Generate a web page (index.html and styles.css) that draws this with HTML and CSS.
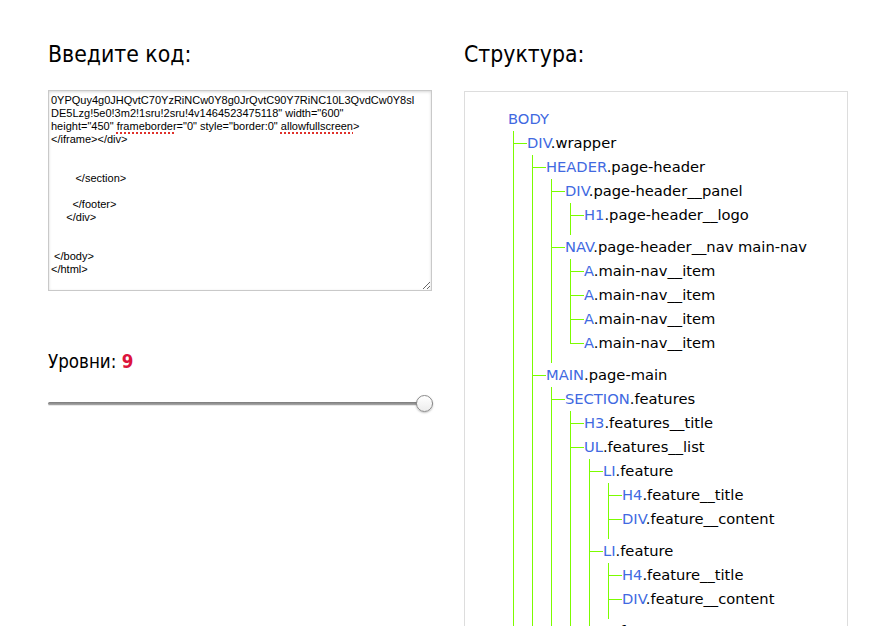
FILE: index.html
```html
<!DOCTYPE html>
<html lang="ru">
<head>
<meta charset="utf-8">
<title>Структура DOM</title>
<link rel="stylesheet" href="styles.css">
</head>
<body>
<div class="page">
  <section class="col">
    <h2 class="title">Введите код:</h2>
    <div class="code" role="textbox" aria-multiline="true">0YPQuy4g0JHQvtC70YzRiNCw0Y8g0JrQvtC90Y7RiNC10L3QvdCw0Y8sl
DE5Lzg!5e0!3m2!1sru!2sru!4v1464523475118" width="600"
height="450" <span class="spell">frameborder</span>="0" style="border:0" <span class="spell">allowfullscreen</span>&gt;
&lt;/iframe&gt;&lt;/div&gt;


        &lt;/section&gt;

       &lt;/footer&gt;
     &lt;/div&gt;


 &lt;/body&gt;
&lt;/html&gt;</div>
    <p class="levels">Уровни: <span class="levels__num">9</span></p>
    <input class="range" type="range" min="1" max="9" value="9" aria-label="Уровни">
  </section>
  <section class="col">
    <h2 class="title">Структура:</h2>
    <div class="tree">
      <ul class="kids kids--root">
        <li><span class="n n--root"><b>BODY</b></span>
          <ul class="kids">
            <li><span class="n"><b>DIV</b>.wrapper</span>
              <ul class="kids">
                <li><span class="n"><b>HEADER</b>.page-header</span>
                  <ul class="kids">
                    <li><span class="n"><b>DIV</b>.page-header__panel</span>
                      <ul class="kids">
                        <li><span class="n"><b>H1</b>.page-header__logo</span></li>
                      </ul>
                    </li>
                    <li><span class="n"><b>NAV</b>.page-header__nav main-nav</span>
                      <ul class="kids kids--tight">
                        <li><span class="n"><b>A</b>.main-nav__item</span></li>
                        <li><span class="n"><b>A</b>.main-nav__item</span></li>
                        <li><span class="n"><b>A</b>.main-nav__item</span></li>
                        <li><span class="n"><b>A</b>.main-nav__item</span></li>
                      </ul>
                    </li>
                  </ul>
                </li>
                <li><span class="n"><b>MAIN</b>.page-main</span>
                  <ul class="kids">
                    <li><span class="n"><b>SECTION</b>.features</span>
                      <ul class="kids">
                        <li><span class="n"><b>H3</b>.features__title</span></li>
                        <li><span class="n"><b>UL</b>.features__list</span>
                          <ul class="kids">
                            <li><span class="n"><b>LI</b>.feature</span>
                              <ul class="kids">
                                <li><span class="n"><b>H4</b>.feature__title</span></li>
                                <li><span class="n"><b>DIV</b>.feature__content</span></li>
                              </ul>
                            </li>
                            <li><span class="n"><b>LI</b>.feature</span>
                              <ul class="kids">
                                <li><span class="n"><b>H4</b>.feature__title</span></li>
                                <li><span class="n"><b>DIV</b>.feature__content</span></li>
                              </ul>
                            </li>
                            <li><span class="n"><b>LI</b>.feature</span>
                              <ul class="kids">
                                <li><span class="n"><b>H4</b>.feature__title</span></li>
                                <li><span class="n"><b>DIV</b>.feature__content</span></li>
                              </ul>
                            </li>
                          </ul>
                        </li>
                      </ul>
                    </li>
                  </ul>
                </li>
              </ul>
            </li>
          </ul>
        </li>
      </ul>
    </div>
  </section>
</div>
</body>
</html>
```
FILE: styles.css
```css
html, body {
  margin: 0;
  background: #fff;
}

body {
  font-family: "DejaVu Sans Condensed", "DejaVu Sans", sans-serif;
  color: #000;
}

.page {
  display: grid;
  grid-template-columns: 384px 384px;
  column-gap: 32px;
  padding: 0 48px;
}

.col {
  display: flex;
  flex-direction: column;
  align-items: flex-start;
}

.title {
  margin: 36px 0 0;
  font-size: 22.8px;
  line-height: 36px;
  font-weight: normal;
}

.code {
  box-sizing: border-box;
  width: 384px;
  height: 201px;
  margin-top: 18px;
  padding: 3px 2px 2px 2px;
  border: 1px solid #c9c9c9;
  box-shadow: inset 0 1px 3px rgba(0, 0, 0, 0.16);
  font-family: "Liberation Sans", Arial, sans-serif;
  font-size: 11px;
  line-height: 13px;
  white-space: pre;
  overflow: hidden;
  resize: both;
  color: #000;
}

.spell {
  text-decoration: underline dotted #e0302a;
  text-decoration-thickness: 2px;
  text-underline-offset: 2px;
}

.levels {
  margin: 59px 0 0;
  font-size: 18.6px;
  line-height: 24px;
}

.levels__num {
  color: #dc143c;
  font-weight: bold;
}

.range {
  -webkit-appearance: none;
  appearance: none;
  width: 385px;
  height: 17px;
  margin: 21px 0 0;
  padding: 0;
  background: transparent;
}

.range::-webkit-slider-runnable-track {
  height: 3px;
  border-radius: 2px;
  background: linear-gradient(#7a7a7a, #a9a9a9);
  box-shadow: 0 1px 0 #e8e8e8;
}

.range::-webkit-slider-thumb {
  -webkit-appearance: none;
  appearance: none;
  box-sizing: border-box;
  width: 17px;
  height: 17px;
  margin-top: -7px;
  border-radius: 50%;
  border: 1px solid #8a8a8a;
  background: linear-gradient(#ffffff, #ececec);
  box-shadow: 0 1px 2px rgba(0, 0, 0, 0.25);
}

.tree {
  box-sizing: border-box;
  width: 384px;
  margin-top: 19px;
  padding: 15px 0 0 43px;
  border: 1px solid #dddddd;
  font-family: "DejaVu Sans", sans-serif;
  font-size: 14.7px;
  line-height: 24px;
}

.kids {
  list-style: none;
  margin: 0 0 0 5px;
  padding: 0 0 8px 13px;
  border-left: 1px solid #7cfc00;
}

.kids--root {
  margin: 0;
  padding: 0;
  border-left: 0;
}

.kids--tight {
  padding-bottom: 0;
  border-left-color: transparent;
}

.kids li {
  position: relative;
}

.kids--tight > li::before {
  content: "";
  position: absolute;
  left: -14px;
  top: 0;
  bottom: 0;
  width: 1px;
  background: #7cfc00;
}

.kids--tight > li:last-child::before {
  bottom: auto;
  height: 13px;
}

.n {
  position: relative;
  display: block;
  height: 24px;
  white-space: nowrap;
}

.n::before {
  content: "";
  position: absolute;
  left: -13px;
  top: 12px;
  width: 13px;
  height: 1px;
  background: #7cfc00;
}

.n--root::before {
  display: none;
}

.n b {
  font-weight: normal;
  color: #4169e1;
}
```
